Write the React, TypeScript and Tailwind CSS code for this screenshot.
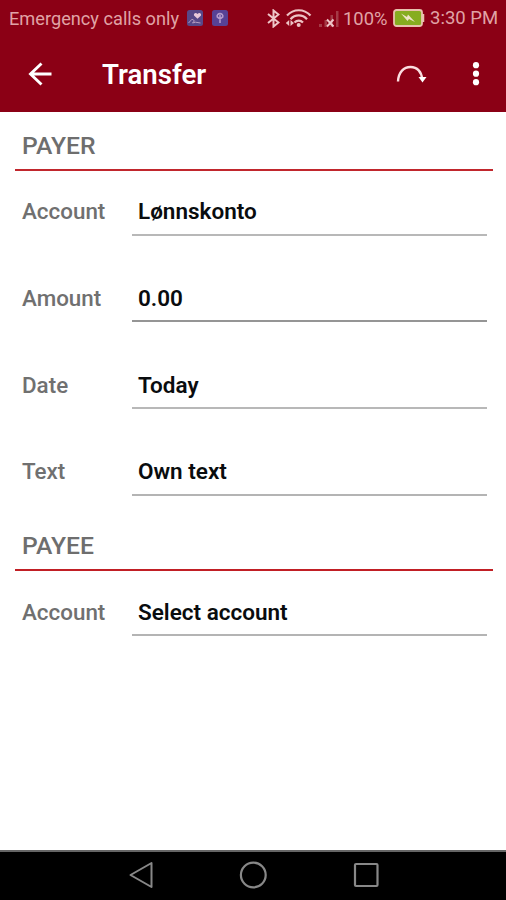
type FieldProps = { label: string; value: string; row: string; line: string; raised?: boolean };

function Field({ label, value, row, line, raised = false }: FieldProps) {
  return (
    <div className={`flex items-end pl-[22px] pr-[19px] font-medium ${row}`}>
      <div className={`w-[110px] shrink-0 text-[22.4px] leading-[26px] text-[#707070] ${raised ? "pb-[12px]" : "pb-[11px]"}`}>
        {label}
      </div>
      <div
        className={`flex-1 border-b-2 pl-[6px] text-[22.5px] font-semibold leading-[26px] text-[#090c0e] ${raised ? "pb-[10px]" : "pb-[9px]"} ${line}`}
      >
        {value}
      </div>
    </div>
  );
}

function SectionTitle({ children, row }: { children: string; row: string }) {
  return (
    <h2 className={`ml-[15px] mr-[13px] flex items-end border-b-2 pb-[9px] pl-[7px] text-[24.7px] font-medium leading-[28px] text-[#6e6e6e] ${row}`}>
      {children}
    </h2>
  );
}

function StatusBar() {
  return (
    <div className="flex h-9 items-center pl-[9px] text-[18.2px] text-[#e0a3a6]">
      <span className="w-[178px] whitespace-nowrap pt-[1px]">Emergency calls only</span>
      <svg className="h-4 w-4 shrink-0" viewBox="0 0 16 16">
        <rect width="16" height="16" rx="2.5" fill="#574888" />
        <path d="M10.5 8.7 7 5.5C6.3 3.2 9 1.8 10.5 4c1.5-2.2 4.2-.8 3.5 1.5z" fill="#e9c9da" />
        <path d="m1.5 13 3.5-3.8 2.5 1.6L5.5 13l3-.8 5 .8" fill="none" stroke="#b59cc0" />
      </svg>
      <svg className="ml-[9px] h-4 w-4 shrink-0" viewBox="0 0 16 16">
        <rect width="16" height="16" rx="2.5" fill="#574295" />
        <path d="M8 13V5M5.3 7C4 2.5 12 2.500 10.700 7L8 9z" fill="none" stroke="#b49acb" strokeWidth="1.6" />
      </svg>
      <svg className="ml-[39px] h-[19px] w-[13px] shrink-0" viewBox="0 0 13 19" fill="none" stroke="#eec6c8" strokeWidth="2">
        <path d="m1 5 10.500 8.500-5 4V1.500l5 4L1 14" />
      </svg>
      <svg className="ml-[5px] h-[20px] w-[27px] shrink-0" viewBox="0 0 27 20" fill="none" stroke="#edc2c4" strokeWidth="2.2">
        <path d="M2 7.500c6.500-7 17-7 23.500 0M5.500 11.200c4.500-5 12-5 16.500 0M9.500 14.500c2.500-2.600 6-2.600 8.500 0" />
        <circle cx="13.7" cy="17" r="2" fill="#edc2c4" stroke="none" />
        <path d="M4.200 12v6L.8 15zM5.500 12v6L9 15z" fill="#edc2c4" stroke="none" />
      </svg>
      <svg className="ml-[6px] h-[19px] w-[21px] shrink-0" viewBox="0 0 21 19">
        <path d="M1 15h3v3H1zM6.500 11H9v7H6.500zM12.500 6H15v12h-2.500zM18 2h2.500v16H18z" fill="#a43a46" />
        <path d="m9 10.500 6.500 7M15.500 10.500l-6.500 7" stroke="#efc7c9" strokeWidth="1.9" />
      </svg>
      <span className="ml-[4px] w-[50px] whitespace-nowrap pt-[1px] text-[18.4px]">100%</span>
      <svg className="h-[18px] w-[32px] shrink-0" viewBox="0 0 32 18">
        <rect x="1" y="1" width="28" height="16" rx="2.5" fill="#86ad20" stroke="#e8c3ad" strokeWidth="1.8" />
        <path d="M30 5v8" stroke="#e8c3ad" strokeWidth="2.5" />
        <path d="m8 4.500 6 3.500 1-2.500 7 7.500-6-3-1.500 2z" fill="#eee4c8" />
      </svg>
      <span className="ml-[5px] whitespace-nowrap pt-[2px] text-[18.5px]">3:30 PM</span>
    </div>
  );
}

function AppBar() {
  return (
    <div className="flex h-[76px] items-center pl-[28px] text-white">
      <svg className="h-6 w-6" viewBox="0 0 24 24" fill="none" stroke="currentColor" strokeWidth="2.9">
        <path d="M23.500 12H2.500M13.500 1.500 2.500 12l11 10.500" />
      </svg>
      <h1 className="ml-[50px] pt-[2px] text-[27.6px] font-semibold leading-[32px]">Transfer</h1>
      <svg className="ml-auto h-[20px] w-[32px]" viewBox="0 0 32 20">
        <path d="M2 17.500C2.500 8 8 3 14.500 3c7 0 11 5 11.500 11.500" fill="none" stroke="#fbdde0" strokeWidth="2.400" />
        <path d="M22.500 13h8l-4 5.500z" fill="#fff" />
      </svg>
      <svg className="ml-[42px] mr-[24px] h-6 w-[12px]" viewBox="0 0 12 24" fill="currentColor">
        <circle cx="6" cy="3.2" r="3.1" />
        <circle cx="6" cy="11.7" r="3.1" />
        <circle cx="6" cy="20.2" r="3.1" />
      </svg>
    </div>
  );
}

function NavBar() {
  return (
    <nav className="flex h-[50px] items-center justify-center border-t-2 border-[#666] bg-black pb-[2px] pl-[2px]">
      <svg className="h-[28px] w-[26px]" viewBox="0 0 26 28" fill="none" stroke="#888" strokeWidth="2" strokeLinejoin="round">
        <path d="M2.500 14 23.500 2v24z" />
      </svg>
      <svg className="ml-[85px] h-[28px] w-[28px]" viewBox="0 0 28 28" fill="none" stroke="#888" strokeWidth="2.2">
        <circle cx="14.3" cy="14" r="12.4" />
      </svg>
      <svg className="ml-[85px] h-[28px] w-[28px]" viewBox="0 0 28 28" fill="none" stroke="#888" strokeWidth="2.2">
        <rect x="3" y="3" width="22.5" height="22" rx="1" />
      </svg>
    </nav>
  );
}

export default function App() {
  return (
    <div className="flex h-[900px] w-[506px] flex-col overflow-hidden bg-white font-['Roboto','Liberation_Sans',sans-serif]">
      <header className="h-[112px] shrink-0 bg-[#8b0015]">
        <StatusBar />
        <AppBar />
      </header>
      <main className="flex-1">
        <SectionTitle row="h-[59px] border-[#c1272d]">PAYER</SectionTitle>
        <Field label="Account" value="Lønnskonto" row="h-[65px]" line="border-[#b8b8b8]" raised />
        <Field label="Amount" value="0.00" row="h-[86px]" line="border-[#959595]" />
        <Field label="Date" value="Today" row="h-[87px]" line="border-[#b8b8b8]" />
        <Field label="Text" value="Own text" row="h-[87px]" line="border-[#b4b4b4]" raised />
        <SectionTitle row="h-[75px] border-[#c11f25]">PAYEE</SectionTitle>
        <Field label="Account" value="Select account" row="h-[65px]" line="border-[#b4b4b4]" />
      </main>
      <NavBar />
    </div>
  );
}
